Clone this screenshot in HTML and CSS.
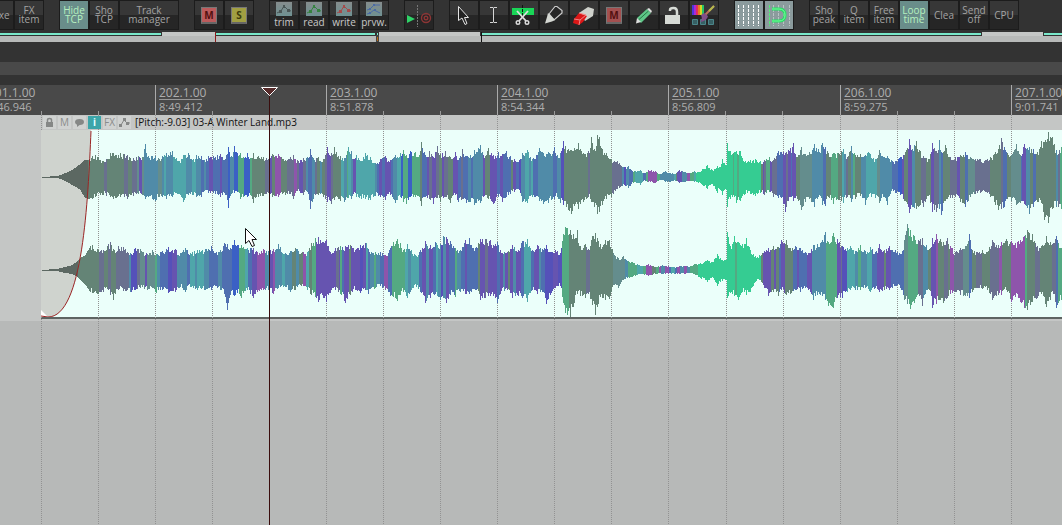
FILE: index.html
```
<!DOCTYPE html>
<html lang="en">

<head>
    <meta charset="UTF-8">
    <meta name="viewport" content="width=device-width, initial-scale=1.0">
    <title>Arrange View</title>
    <link rel="stylesheet" href="styles.css">
</head>

<body>
    <header class="toolbar">
        <div class="group">
            <button class="tool">&nbsp;&nbsp;&nbsp;&nbsp;xe</button>
            <button class="tool">FX<br>item</button>
        </div>
        <div class="group">
            <button class="tool active">Hide<br>TCP</button>
            <button class="tool">Sho<br>TCP</button>
            <button class="tool wide">Track<br>manager</button>
        </div>
        <div class="group">
            <button class="tool"><span class="lamp red">M</span></button>
            <button class="tool"><span class="lamp yellow">S</span></button>
        </div>
        <div class="group">
            <button class="tool mode trim">
                <svg width="16" height="14" viewBox="0 0 16 14"><path d="M1 11L5 9L8 4L12 8L15 9" /><path class="dot" d="M3 8h3v3h-3zM7 3h2v3h-2zM11 7h3v3h-3z" /></svg>
                trim
            </button>
            <button class="tool mode read">
                <svg width="16" height="14" viewBox="0 0 16 14"><path d="M1 11L5 9L8 4L12 8L15 9" /><path class="dot" d="M3 8h3v3h-3zM7 3h2v3h-2zM11 7h3v3h-3z" /></svg>
                read
            </button>
            <button class="tool mode write">
                <svg width="16" height="14" viewBox="0 0 16 14"><path d="M1 11L5 9L8 4L12 8L15 9" /><path class="dot" d="M3 8h3v3h-3zM7 3h2v3h-2zM11 7h3v3h-3z" /></svg>
                write
            </button>
            <button class="tool mode preview">
                <svg width="16" height="14" viewBox="0 0 16 14"><path d="M1 8L4 7L8 3L14 3M1 12L4 11L8 8L14 11" /><path class="dot" d="M3 6h2v2h-2zM7 2h2v2h-2zM3 10h2v2h-2zM8 7h2v2h-2z" /></svg>
                prvw.
            </button>
        </div>
        <div class="group">
            <button class="tool" aria-label="Play and record">
                <svg width="28" height="28" viewBox="0 0 28 28">
                    <path d="M2 14L10 18L2 22Z" fill="#2fd267" />
                    <path d="M12.500 4V26" stroke="#777" stroke-dasharray="2 1" />
                    <circle cx="21" cy="17" r="4.500" fill="none" stroke="#8c3535" stroke-width="1.400" />
                    <circle cx="21" cy="17" r="1.800" fill="none" stroke="#8c3535" stroke-width="1.400" />
                </svg>
            </button>
        </div>
        <div class="group">
            <button class="tool" aria-label="Select">
                <svg width="28" height="28" viewBox="0 0 28 28"><path d="M8.500 5.500V19.500L12 17L15 23.500L17 22.500L14.500 16.500H18.500Z" fill="#222" stroke="#e4e4e4" /></svg>
            </button>
            <button class="tool" aria-label="Text cursor">
                <svg width="28" height="28" viewBox="0 0 28 28"><path d="M10 6.500H13L13.500 7.500L14 6.500H17M13.500 7V21M10 21.500H13L13.500 20.500L14 21.500H17" fill="none" stroke="#d5d5d5" /></svg>
            </button>
            <button class="tool" aria-label="Split">
                <svg width="28" height="28" viewBox="0 0 28 28">
                    <path d="M2 7H24V14H2Z" fill="#19d657" />
                    <path d="M12.500 4V15" stroke="#111" stroke-dasharray="3 1" />
                    <path d="M7 10L16 20M18 10L9 20" stroke="#ddd" stroke-width="1.800" />
                    <circle cx="8" cy="21.500" r="1.800" fill="none" stroke="#ddd" stroke-width="1.400" />
                    <circle cx="17" cy="21.500" r="1.800" fill="none" stroke="#ddd" stroke-width="1.400" />
                </svg>
            </button>
            <button class="tool" aria-label="Marker">
                <svg width="28" height="28" viewBox="0 0 28 28"><path d="M9 13L15 5.500H17L22 9.500V12L14 19Z" fill="#272727" stroke="#ccc" stroke-width="1.200" /><path d="M8 12L15 19L12 20.500L5 22.500L7 16Z" fill="#d4d7d2" /></svg>
            </button>
            <button class="tool" aria-label="Eraser">
                <svg width="28" height="28" viewBox="0 0 28 28"><path d="M9 12L18 6L24 8L23 15L15 20Z" fill="#cfd2cc" /><path d="M9 12L4 18L3 22L9 24L13 21L17 15Z" fill="#dc1717" /><path d="M4 18L10 19L16 14M10 19L9 24M9 12L16 14" fill="none" stroke="#f18484" /></svg>
            </button>
            <button class="tool"><span class="lamp dim">M</span></button>
            <button class="tool" aria-label="Pencil">
                <svg width="28" height="28" viewBox="0 0 28 28"><path d="M7 17L17 8L21 12L11 22Z" fill="#5fc688" /><path d="M9 18.500L18.500 10" stroke="#237b45" /><path d="M7 17L11 21L6 22.500ZM17 8L19 7L22 10L21 12Z" fill="#ddd" /></svg>
            </button>
            <button class="tool" aria-label="Unlock">
                <svg width="28" height="28" viewBox="0 0 28 28"><path d="M5 14H20V23H5Z" fill="#d7dbd6" /><path d="M10 10V9Q10 7 13.500 7Q17 7 17 11V15" fill="none" stroke="#d7dbd6" stroke-width="2.500" /></svg>
            </button>
            <button class="tool" aria-label="Colour tool">
                <svg width="28" height="28" viewBox="0 0 28 28">
                    <path d="M2 4H4V14H2Z" fill="#4e35dd" /><path d="M4 4H6V14H4Z" fill="#a92bd8" /><path d="M6 4H8V14H6Z" fill="#e12d63" /><path d="M8 4H10V14H8Z" fill="#e87b1e" /><path d="M10 4H12V14H10Z" fill="#d8d527" /><path d="M12 4H14V14H12Z" fill="#27c565" />
                    <path d="M2.500 18.500H7.500V23.500H2.500ZM10.500 18.500H15.500V23.500H10.500ZM18.500 18.500H23.500V23.500H18.500Z" fill="#376064" stroke="#4b8589" />
                    <path d="M14 15L24 5" stroke="#bb705a" stroke-width="2" /><path d="M14 12L18 15Q17 20 10 21Q13 18 11 14Z" fill="#805088" /><path d="M19 10L24 5" stroke="#b3ba4c" stroke-width="2" />
                </svg>
            </button>
        </div>
        <div class="group">
            <button class="tool lit" aria-label="Grid lines">
                <svg width="28" height="28" viewBox="0 0 28 28"><path d="M3.500 4V25M8.500 4V25M13.500 4V25M18.500 4V25M23.500 4V25" stroke="#fff" stroke-dasharray="3 1" /></svg>
            </button>
            <button class="tool lit" aria-label="Snap">
                <svg width="28" height="28" viewBox="0 0 28 28"><path d="M8.500 4V25M13.500 4V25M18.500 4V25M24.500 4V25" stroke="#b8c4c4" stroke-dasharray="3 1" /><path d="M4.500 4V25" stroke="#53ec77" stroke-dasharray="3 1" /><path d="M7 8H14Q20 8 20 14Q20 20 14 20H7" fill="none" stroke="#22df62" stroke-width="3" /><path d="M7 8H14Q20 8 20 14Q20 20 14 20H7" fill="none" stroke="#80f7a1" stroke-width="1" /></svg>
            </button>
        </div>
        <div class="group">
            <button class="tool">Sho<br>peak</button>
            <button class="tool">Q<br>item</button>
            <button class="tool">Free<br>item</button>
            <button class="tool active">Loop<br>time</button>
            <button class="tool">Clea</button>
            <button class="tool">Send<br>off</button>
            <button class="tool">CPU</button>
        </div>
    </header>

    <svg class="overview" viewBox="0 0 1062 10" preserveAspectRatio="none">
        <path d="M0 0H1062V4H0Z" fill="#333" />
        <path d="M0 4H1062V10H0Z" fill="#b8bab9" />
        <path d="M162 0H215V4H162ZM379 0H480V4H379ZM982 0H1043V4H982Z" fill="#c5c7c6" />
        <path d="M0 1H161V3H0ZM216 1H375V3H216ZM377 1H378V3H377ZM482 1H981V3H482ZM1044 1H1062V3H1044Z" fill="#7ae9cb" />
        <path d="M376 3H379V10H376Z" fill="#444" />
        <path d="M377 5H378V9H377Z" fill="#b96a10" />
        <path d="M215 0H216V10H215Z" fill="#8e1c1c" />
        <path d="M481 0H482V10H481Z" fill="#111" />
    </svg>

    <div class="lane gap-lane"></div>
    <div class="lane region-lane"></div>
    <div class="lane marker-lane"></div>

    <main class="timeline">
        <div class="ruler">
            <div class="measure"><b>201.1.00</b><span>8:46.946</span></div>
            <div class="measure"><b>202.1.00</b><span>8:49.412</span></div>
            <div class="measure"><b>203.1.00</b><span>8:51.878</span></div>
            <div class="measure"><b>204.1.00</b><span>8:54.344</span></div>
            <div class="measure"><b>205.1.00</b><span>8:56.809</span></div>
            <div class="measure"><b>206.1.00</b><span>8:59.275</span></div>
            <div class="measure"><b>207.1.00</b><span>9:01.741</span></div>
        </div>

        <div class="arrange">
            <svg class="grid" id="grid"></svg>
            <section class="track">
                <div class="clip">
                    <div class="clip-header">
                        <button class="chip" aria-label="Lock"><svg width="13" height="13" viewBox="0 0 13 13"><path d="M3 6H10V11H3Z" fill="#858786" /><path d="M4.500 6V4Q4.500 2.500 6.500 2.500Q8.500 2.500 8.500 4V6" fill="none" stroke="#858786" stroke-width="1.500" /></svg></button>
                        <button class="chip">M</button>
                        <button class="chip" aria-label="Notes"><svg width="13" height="13" viewBox="0 0 13 13"><ellipse cx="6.500" cy="6" rx="4.500" ry="3" fill="#858786" /><path d="M4 8L4 11L8 8Z" fill="#858786" /></svg></button>
                        <button class="chip on">i</button>
                        <button class="chip">FX</button>
                        <button class="chip" aria-label="Envelope"><svg width="13" height="13" viewBox="0 0 13 13"><path d="M1 10L3 9L6 4L9 7H12" fill="none" stroke="#858786" /><path d="M1 8H4V11H1ZM5 2H8V5H5ZM8 6H11V9H8Z" fill="#858786" /></svg></button>
                        <span class="clip-name">[Pitch:-9.03] 03-A Winter Land.mp3</span>
                    </div>
                    <div class="clip-body">
                        <svg class="wave" id="wave">
                            <path class="fade" d="M0 0H50C47 70 42 187 7 187H0Z" />
                            <path class="handle" d="M0 180L7 187H0Z" />
                            <g id="peaks"></g>
                            <path class="fade-line" d="M50 1C47 70 42 187 7 187L0 186" />
                        </svg>
                    </div>
                </div>
            </section>
        </div>

        <div class="playhead"></div>
        <svg class="playhead-cap" width="19" height="11" viewBox="0 0 19 11"><path d="M1.500 1.500H17.500L9.500 9.500Z" fill="#562a2a" stroke="#fff" /></svg>
        <svg class="pointer" width="14" height="22" viewBox="0 0 14 22"><path d="M1.500 1.500V16.500L5 13.500L8 19.500L10.500 18.500L8 12.500H12.500Z" fill="#fff" stroke="#111" /></svg>
    </main>

    <script src="script.js"></script>
</body>

</html>
```
FILE: styles.css
```
* {
    margin: 0;
    padding: 0;
    box-sizing: border-box;
    font-family: 'Open Sans', 'Noto Sans', sans-serif;
}

body {
    height: 100vh;
    display: flex;
    flex-direction: column;
    overflow: hidden;
    background: #333;
}

button {
    border: none;
    cursor: pointer;
}

svg {
    display: block;
}

/* Toolbar */

.toolbar {
    display: flex;
    flex-shrink: 0;
    gap: 15px;
    height: 32px;
    margin-left: -16px;
}

.group {
    display: flex;
}

.tool {
    display: flex;
    flex-shrink: 0;
    align-items: center;
    justify-content: center;
    width: 30px;
    height: 30px;
    border: 1px solid #1c1c1c;
    background: linear-gradient(#373737 50%, #262626 50%);
    color: #a3a3a3;
    font-size: 10px;
    line-height: 9px;
    text-align: center;
    white-space: nowrap;
}

.tool.wide {
    width: 60px;
}

.tool.active {
    background: #698d8a;
    color: #b5f0bf;
}

.tool.lit {
    background: #8b9b9d;
}

.mode {
    flex-direction: column;
    justify-content: flex-end;
    gap: 2px;
    padding-bottom: 2px;
    color: #c9c9c9;
}

.mode svg {
    background: linear-gradient(#858c8d, #6f9192);
    fill: none;
    stroke: #4a5656;
}

.mode .dot {
    fill: #4a5656;
    stroke: none;
}

.read svg {
    stroke: #36823f;
}

.read .dot {
    fill: #36823f;
}

.write svg {
    stroke: #a54a4a;
}

.write .dot {
    fill: #a54a4a;
}

.preview svg {
    stroke: #4a6aa5;
}

.preview .dot {
    fill: #4a6aa5;
}

.lamp {
    width: 16px;
    height: 17px;
    border: 1px solid #777;
    border-bottom: 2px solid #666;
    color: #541010;
    font-size: 10px;
    font-weight: bold;
    line-height: 14px;
}

.red {
    background: #bd5b5c;
}

.yellow {
    background: #a19f42;
    color: #3d3c0c;
}

.dim {
    background: #a35050;
}

/* Overview and lanes */

.overview {
    flex-shrink: 0;
    width: 100%;
    height: 10px;
}

.lane {
    flex-shrink: 0;
}

.gap-lane {
    height: 20px;
    background: #333;
}

.region-lane {
    height: 13px;
    background: #494949;
}

.marker-lane {
    height: 10px;
    background: #333;
}

/* Timeline */

.timeline {
    position: relative;
    display: flex;
    flex: 1;
    flex-direction: column;
    overflow: hidden;
}

.ruler {
    display: flex;
    flex-shrink: 0;
    height: 30px;
    padding-left: 155px;
    background: #494949;
}

.measure {
    flex: 0 0 171px;
    padding-left: 3px;
    border-left: 1px solid #aaa;
    background:
        linear-gradient(#999, #999) 56px 100% / 1px 4px no-repeat,
        linear-gradient(#999, #999) 113px 100% / 1px 4px no-repeat;
    color: #adadad;
}

.measure:first-child {
    margin-left: -171px;
}

.measure:nth-child(5) {
    flex-basis: 172px;
}

.measure b {
    display: block;
    width: 43px;
    height: 15px;
    border-bottom: 1px solid #999;
    font-size: 12px;
    font-weight: normal;
    line-height: 16px;
}

.measure span {
    display: block;
    font-size: 11px;
    line-height: 13px;
}

.arrange {
    position: relative;
    flex: 1;
    background: #b7b9b8;
}

.grid {
    position: absolute;
    z-index: 1;
    width: 100%;
    height: 100%;
    stroke: #929292;
    stroke-dasharray: 1 1;
    shape-rendering: crispEdges;
}

.track {
    padding: 0 0 2px 41px;
    background: #c4c6c5;
}

.clip-header {
    display: flex;
    align-items: center;
    gap: 2px;
    height: 15px;
    padding-left: 2px;
}

.chip {
    position: relative;
    z-index: 2;
    flex-shrink: 0;
    width: 13px;
    height: 13px;
    background: #d0d2d1;
    color: #8a8c8b;
    font-size: 10px;
    line-height: 13px;
}

.chip.on {
    background: #3ca5a9;
    color: #e4ffff;
    font-weight: bold;
}

.clip-name {
    padding-left: 2px;
    color: #111;
    font-size: 10px;
    line-height: 13px;
    white-space: nowrap;
}

.clip-body {
    border-bottom: 2px solid #5e6462;
    background: #ebfffa;
}

.wave {
    position: relative;
    z-index: 2;
    width: 100%;
    height: 187px;
}

.wave .fade {
    fill: #cfd3ce;
}

.wave .handle {
    fill: #fff;
}

.wave .fade-line {
    fill: none;
    stroke: #9b2424;
}

#peaks {
    shape-rendering: crispEdges;
}

.playhead {
    position: absolute;
    z-index: 3;
    top: 10px;
    bottom: 0;
    left: 269px;
    width: 1px;
    background: #3a0d0d;
}

.playhead-cap {
    position: absolute;
    z-index: 4;
    top: 1px;
    left: 260px;
}

.pointer {
    position: absolute;
    z-index: 4;
    top: 142px;
    left: 244px;
}
```
FILE: script.js
```
const SVG = 'http://www.w3.org/2000/svg';
const CLIP_START = 41;

const colors = {
    n: '#5c6862', g: '#648476', t: '#648d8d', b: '#508ba8', c: '#4fa6aa',
    i: '#4f6fb0', v: '#6654b0', u: '#5551b9', s: '#69708f', B: '#3b60c5',
    G: '#54a982', m: '#8e55ab', e: '#35cc92'
};

// peaks: x,up,down  tones: start x + color key
const channels = [
    {
        center: 47,
        peaks: '42,0,1 57,1,1 61,2,2 65,4,4 70,6,7 76,10,10 80,13,13 84,17,20 88,17,22 92,21,22 95,22,20 103,16,18 110,24,20 113,24,22 120,24,20 127,22,22 133,19,19 138,21,17 142,20,18 145,33,22 148,21,20 155,21,24 158,19,20 166,24,22 172,26,20 178,16,17 183,22,25 188,24,18 192,17,18 196,22,20 201,21,20 204,17,14 208,21,16 213,21,16 220,23,20 225,18,18 228,30,31 231,21,17 234,31,16 237,24,15 240,24,22 243,20,20 247,24,20 250,19,18 253,24,26 258,21,20 263,20,19 268,18,16 272,23,20 278,23,20 285,17,18 290,20,17 293,22,22 297,17,14 303,19,18 307,20,15 310,28,32 313,19,22 318,20,18 323,18,20 327,30,25 331,24,27 334,30,23 340,21,24 344,19,25 348,30,21 351,26,22 353,18,17 356,22,20 361,16,22 365,24,22 370,20,23 375,14,19 380,18,20 385,21,23 390,17,18 395,22,26 400,24,20 403,27,25 406,22,27 410,26,20 415,25,20 419,22,20 421,35,29 425,22,20 429,26,22 433,20,27 437,31,21 440,23,25 445,26,20 450,20,26 455,25,18 458,17,25 462,28,22 466,21,26 470,22,25 474,27,28 480,32,26 483,22,20 488,29,22 493,22,27 498,25,20 502,23,25 506,26,20 510,21,17 514,18,15 518,15,12 522,24,25 527,27,26 532,18,20 539,29,24 543,24,27 548,25,26 554,30,22 557,22,20 560,24,26 563,36,28 568,28,33 571,27,37 574,29,29 578,34,32 583,24,25 588,26,20 591,40,25 594,28,30 597,42,37 599,40,35 602,28,28 606,24,22 611,18,20 617,16,12 622,10,9 628,11,11 634,6,5 640,7,8 643,4,4 648,7,5 655,6,6 660,3,3 665,6,5 670,4,5 675,3,4 679,7,6 685,5,5 690,4,4 694,6,5 698,5,6 702,8,8 707,12,12 712,7,7 717,11,16 719,10,12 722,18,18 726,12,13 727,34,30 730,26,22 734,25,20 736,26,26 740,26,24 745,16,17 750,17,17 755,18,19 760,16,16 764,17,18 769,20,15 773,17,20 778,26,21 783,25,27 785,24,35 788,27,24 793,34,24 797,20,22 801,30,33 805,23,25 809,25,22 814,33,30 818,28,20 822,34,28 825,30,29 828,24,20 833,24,27 838,24,23 843,28,26 847,20,20 851,31,25 855,22,22 860,23,19 865,22,28 868,25,20 875,18,21 879,27,26 883,20,20 887,21,28 891,17,14 895,16,16 900,20,18 903,22,22 909,38,36 912,28,30 916,36,32 920,26,28 923,21,30 928,18,19 932,34,35 936,26,35 939,37,32 941,25,38 945,32,24 950,20,21 955,20,20 960,22,25 965,25,30 970,20,20 975,18,17 980,18,16 985,17,15 990,20,20 995,25,28 998,28,33 1001,39,32 1004,30,30 1007,24,22 1011,22,24 1016,33,28 1020,22,26 1024,33,27 1029,30,37 1033,28,30 1037,25,25 1041,36,26 1044,35,43 1048,45,46 1052,40,32 1056,27,30 1061,30,32',
        tones: '42n 88g 104s 107g 124s 128g 132s 137t 139v 142t 144b 158t 162b 164c 166b 173c 186b 192c 196b 201i 204b 206i 209v 213i 220v 222i 228B 230b 234B 238G 244B 250G 252g 265s 270v 272g 275m 281g 287s 294m 297s 299v 303s 306b 308i 312b 315s 317g 320b 322g 325s 327v 331s 333g 341c 344b 347G 348c 351b 353v 356c 375b 377i 379v 382i 385v 391i 393b 397c 401B 403G 408B 412G 420g 422i 427v 429s 432v 436s 439g 442v 444s 448g 453v 458i 461s 463i 468b 471i 473b 483v 485g 490v 497i 500v 503i 511g 513v 516i 519u 521b 525c 529b 531c 533i 538b 553i 557b 561u 564g 588s 590g 612s 622b 624u 626b 629i 633G 635c 643i 646G 648m 657G 660b 674c 676g 677v 682b 687m 690G 694c 696e 733G 734e 737G 739e 761g 763v 764s 766G 770v 772s 777i 783v 786s 788v 791i 792v 796g 800t 812b 823i 826g 831G 838g 842c 844b 846s 848g 851b 853G 855g 861b 866c 877t 880b 892i 898B 902v 904g 908v 912b 915g 921s 926g 931v 934s 939b 941i 943g 950s 957v 960g 965i 968t 975s 990g 1001s 1003i 1007g 1011t 1021i 1022v 1026b 1030g 1033i 1036g 1056b 1058s 1060G'
    },
    {
        center: 140,
        peaks: '42,0,1 56,1,1 65,3,3 72,5,4 76,8,6 80,12,10 85,15,15 90,24,22 92,25,23 97,21,24 103,20,22 108,26,20 110,28,25 113,21,30 118,24,20 123,23,21 130,17,22 135,22,20 140,21,18 147,16,20 152,20,18 156,16,23 160,18,20 168,23,23 175,21,22 180,17,17 185,22,22 190,17,17 197,20,20 205,21,20 211,24,20 215,17,16 220,20,20 224,27,24 227,26,40 230,22,25 234,30,26 237,25,23 241,25,28 247,22,20 253,22,28 257,18,22 263,21,20 268,19,20 273,21,24 278,26,18 285,17,17 290,19,22 295,22,20 303,18,16 307,18,20 311,27,25 315,32,27 318,33,32 323,28,28 326,30,32 330,18,23 335,22,20 340,24,24 345,24,33 350,25,25 355,20,20 360,25,23 366,27,20 368,21,24 375,18,18 380,18,16 385,15,20 390,22,26 393,28,27 397,31,31 400,27,25 403,20,22 407,26,28 411,20,20 416,14,17 420,20,22 425,29,33 430,25,28 435,28,24 440,26,30 443,34,28 446,33,33 450,29,25 455,22,27 460,20,22 465,30,24 469,32,24 475,22,20 480,31,30 485,31,28 490,30,26 493,25,26 497,28,33 500,20,24 507,18,20 512,25,28 518,20,26 522,29,28 527,31,32 532,20,20 537,25,24 542,21,22 546,25,34 550,18,25 555,20,18 560,17,16 563,36,33 565,43,43 567,42,45 570,40,47 573,36,37 577,40,24 580,24,26 585,26,28 588,21,24 592,34,35 595,37,45 600,26,27 605,30,30 609,30,29 614,15,15 618,12,18 623,14,10 627,9,8 632,8,7 637,6,5 642,4,4 648,6,6 655,3,4 662,5,4 668,4,4 674,3,4 680,4,4 685,4,4 690,4,3 695,6,5 700,7,8 707,10,12 712,8,7 717,16,16 720,12,12 726,10,10 727,38,28 730,24,23 734,34,26 738,28,30 742,26,22 746,32,25 750,20,22 755,14,12 759,15,10 764,19,18 768,22,26 773,24,22 778,23,26 781,30,20 786,30,25 790,22,24 795,24,20 800,22,22 805,18,18 808,17,20 813,25,30 817,26,25 822,30,26 825,38,30 828,28,36 833,37,38 837,31,28 842,24,28 847,22,22 850,24,20 855,19,20 860,25,20 865,19,18 870,23,22 875,18,18 879,26,22 884,20,20 889,24,20 895,20,16 901,16,20 904,30,30 907,46,34 910,40,39 914,34,33 918,30,24 922,32,36 926,25,20 929,21,20 932,32,38 936,36,34 940,31,30 943,28,33 947,32,28 950,24,24 955,18,22 960,22,25 965,24,26 969,36,28 972,20,22 977,18,18 982,20,19 987,18,20 992,30,30 998,25,25 1001,28,25 1006,31,20 1011,29,32 1015,27,27 1020,30,32 1024,34,38 1027,40,40 1032,36,32 1037,24,28 1041,24,24 1046,34,37 1050,28,30 1053,27,24 1056,34,38 1061,22,30',
        tones: '42n 78g 99s 104g 108s 111g 116s 129b 131u 137s 140t 145v 147t 155G 157b 160i 168u 172v 177b 187i 190c 195b 197c 204b 209i 218b 222i 232B 239G 245c 248i 252v 257m 265b 270v 273m 275b 282c 285b 292g 296b 299g 303m 306c 309g 312G 316v 336s 339v 340G 342i 344v 349g 351v 360u 363v 366c 368i 370b 374G 376b 380i 384m 388i 392G 405c 408b 411c 419i 422v 426b 429v 433i 436c 438b 441u 443b 446v 449i 455G 457b 461i 465v 467i 478g 480v 485s 488v 497i 500v 503b 505v 508g 510v 513b 516v 521i 524c 531i 534v 539b 541i 545u 553v 558u 562G 569g 586s 590g 613t 625b 628G 637c 643G 646m 652g 656G 659m 661b 665m 669i 671c 675i 677m 680b 684m 687b 690G 698e 735G 737e 761g 763v 771g 774v 776g 779i 781v 785g 793i 797v 799i 807v 812b 826G 837v 841s 842u 847c 855b 858G 861b 867c 872i 877v 884g 886v 891i 904t 908G 918s 923b 928g 931v 936m 938g 944s 948g 950m 954s 963t 969i 972g 976s 982g 990s 999m 1002g 1011m 1025G 1027g 1035s 1040g 1052s 1056i 1058G'
    }
];

function noise(n) {
    const v = Math.sin(n * 12.9898) * 43758.5453;
    return v - Math.floor(v);
}

function drawChannel(channel, seed) {
    const peaks = channel.peaks.split(' ').map(p => p.split(',').map(Number));
    const tones = channel.tones.split(' ').map(t => [parseInt(t), t.slice(-1)]);
    const paths = {};
    let p = 0;
    let t = 0;

    for (let x = peaks[0][0]; x <= peaks[peaks.length - 1][0]; x++) {
        while (p < peaks.length - 2 && peaks[p + 1][0] <= x) p++;
        while (t < tones.length - 1 && tones[t + 1][0] <= x) t++;

        const [x1, up1, down1] = peaks[p];
        const [x2, up2, down2] = peaks[p + 1];
        const k = (x - x1) / (x2 - x1);
        const onPeak = x === x1 || x === x2;
        const cut = n => onPeak || x < 90 ? 1 : 1 - noise(n) * 0.22;
        const up = Math.round((up1 + (up2 - up1) * k) * cut(x + seed));
        const down = Math.round((down1 + (down2 - down1) * k) * cut(x + seed + 5000));

        const key = tones[t][1];
        paths[key] = (paths[key] || '') +
            `M${x - CLIP_START} ${channel.center - up}h1v${up + Math.max(down, 1)}h-1z`;
    }

    for (const key in paths) {
        const path = document.createElementNS(SVG, 'path');
        path.setAttribute('d', paths[key]);
        path.setAttribute('fill', colors[key]);
        document.getElementById('peaks').appendChild(path);
    }
}

function drawGrid() {
    const grid = document.getElementById('grid');
    grid.innerHTML = '';
    for (let n = 0; CLIP_START + n * 57 < window.innerWidth; n++) {
        // beats drift one pixel over the later bars
        const x = CLIP_START + n * 57 + (n > 11 ? 1 : 0) + 0.5;
        const line = document.createElementNS(SVG, 'line');
        line.setAttribute('x1', x);
        line.setAttribute('x2', x);
        line.setAttribute('y1', 0);
        line.setAttribute('y2', '100%');
        grid.appendChild(line);
    }
}

channels.forEach((channel, i) => drawChannel(channel, i * 1300));
drawGrid();
window.addEventListener('resize', drawGrid);
```
